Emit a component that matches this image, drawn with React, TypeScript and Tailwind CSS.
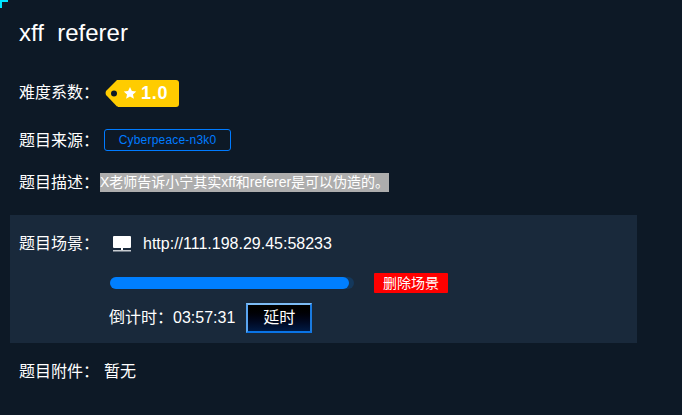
const cjk = "font-['Liberation_Sans','Noto_Sans_CJK_SC',sans-serif]";

function Row({ label, children, className, labelClass }: { label: string; children: React.ReactNode; className?: string; labelClass?: string }) {
  return (
    <div className={`flex items-center ${className ?? ""}`}>
      <span className={`w-[86px] shrink-0 text-base text-white ${labelClass ?? ""}`}>{label}</span>
      {children}
    </div>
  );
}

function PriceTag() {
  return (
    <div className="flex items-center">
      <svg width="13" height="27" viewBox="0 0 13 27" className="shrink-0">
        <path d="M13 0 L12 0 L1 11 Q0 13.5 1 15 L12 26.5 L13 26.5 Z" fill="#ffcc00" />
        <circle cx="9" cy="13.5" r="3" fill="#0c1928" />
      </svg>
      <div className="flex h-[27px] w-[61px] items-center gap-[4px] rounded-r-[3px] bg-[#ffcc00] pl-[5px] text-white">
        <svg width="14" height="14" viewBox="0 0 24 24" fill="currentColor">
          <path d="M12 1.5l3.2 7 7.6.8-5.7 5.1 1.6 7.5L12 18l-6.7 3.9 1.6-7.5L1.2 9.3l7.6-.8z" />
        </svg>
        <span className="text-[18px] font-bold leading-none tracking-[0.8px]">1.0</span>
      </div>
    </div>
  );
}

export default function App() {
  return (
    <div className={`relative h-[415px] w-[682px] overflow-hidden bg-[#0d1926] ${cjk}`}>
      {/* corner mark */}
      <div className="absolute left-0 top-0 h-[8px] w-[8px] border-l-[2px] border-t-[2px] border-[#00e5ff]" />

      <div className="pt-[18px]">
        <h1 className="pl-[19px] text-[24px] leading-[30px] text-white whitespace-pre">xff  referer</h1>

        <Row label="难度系数：" className="mt-[24px] h-[40px] pl-[19px] pt-[2px]">
          <PriceTag />
        </Row>

        <Row label="题目来源：" labelClass="mt-[2px]" className="mt-[8px] h-[40px] pl-[19px]">
          <span className="-ml-[1px] flex h-[22px] w-[127px] items-center justify-center rounded-[3px] border border-[#007bff] text-xs tracking-[0.2px] text-[#007bff]">
            Cyberpeace-n3k0
          </span>
        </Row>

        <Row label="题目描述：" labelClass="mt-[2px]" className="mt-[2px] h-[40px] pl-[19px]">
          <span className="-ml-[5px] bg-[#adadad] text-sm leading-[19px] text-white">X老师告诉小宁其实xff和referer是可以伪造的。</span>
        </Row>

        <div className="ml-[10px] mt-[13px] h-[128px] w-[627px] bg-[#19293b] pl-[9px] pt-[16px]">
          <Row label="题目场景：" className="h-[24px] pt-[2px]">
            <svg width="20" height="18" viewBox="0 0 20 18" className="ml-[7px] shrink-0" fill="#fff">
              <rect x="1" y="1" width="18" height="12" rx="1" />
              <rect x="9" y="13" width="2" height="2" />
              <rect x="1" y="15" width="18" height="1.5" fill="#c8ccd1" />
            </svg>
            <span className="ml-[11px] text-base text-white">http://111.198.29.45:58233</span>
          </Row>

          <div className="mt-[18px] flex items-center pl-[91px]">
            <div className="h-[12px] w-[244px] rounded-full bg-[#14385c]">
              <div className="h-[12px] w-[239px] rounded-full bg-[#007fff]" />
            </div>
            <button className="ml-[20px] h-[20px] w-[74px] rounded-[1px] bg-[#ff0000] text-sm leading-[20px] text-white">删除场景</button>
          </div>

          <div className="mt-[10px] flex items-center pl-[90px]">
            <span className="text-base text-white whitespace-pre">倒计时：03:57:31</span>
            <button className="ml-[11px] h-[30px] w-[66px] border-2 border-t-[#7dbcf5] border-l-[#5aa5f0] border-r-[#1a7be0] border-b-[#0a74e6] bg-gradient-to-b from-[#000000] to-[#001a44] text-base text-white">延时</button>
          </div>
        </div>

        <Row label="题目附件：" className="mt-[13px] h-[30px] pl-[19px] pt-[2px]">
          <span className="-ml-[1px] text-base text-white">暂无</span>
        </Row>
      </div>
    </div>
  );
}
